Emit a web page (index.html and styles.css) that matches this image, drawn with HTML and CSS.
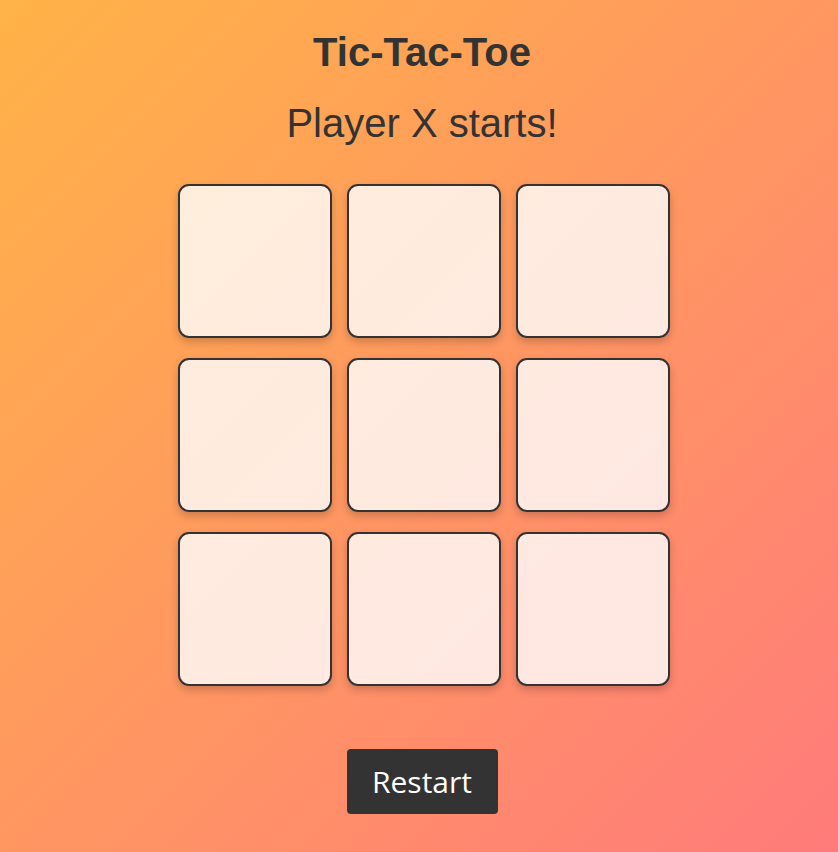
FILE: index.html
```html
<!DOCTYPE html>
<html lang="en">
<head>
<meta charset="utf-8">
<title>Tic-Tac-Toe</title>
<link rel="stylesheet" href="styles.css">
</head>
<body>
<main class="game">
  <h1 class="title">Tic-Tac-Toe</h1>
  <p class="status">Player X starts!</p>
  <div class="board">
    <button class="cell"></button>
    <button class="cell"></button>
    <button class="cell"></button>
    <button class="cell"></button>
    <button class="cell"></button>
    <button class="cell"></button>
    <button class="cell"></button>
    <button class="cell"></button>
    <button class="cell"></button>
  </div>
  <button class="restart">Restart</button>
</main>
</body>
</html>
```
FILE: styles.css
```css
html, body {
  margin: 0;
  padding: 0;
  height: 100%;
}
body {
  background: linear-gradient(135deg, #ffb347 0%, #ff7b7b 100%);
  font-family: "Liberation Sans", Arial, sans-serif;
  color: #333;
  overflow: hidden;
}
.game {
  display: flex;
  flex-direction: column;
  align-items: center;
  padding-left: 6px;
  padding-top: 29px;
}
.title {
  margin: 0;
  font-size: 40px;
  font-weight: bold;
  line-height: 46px;
}
.status {
  margin: 25px 0 0;
  font-size: 40px;
  line-height: 46px;
}
.board {
  margin-top: 38px;
  margin-left: 3px;
  display: grid;
  grid-template-columns: repeat(3, 154px);
  grid-auto-rows: 154px;
  column-gap: 15px;
  row-gap: 20px;
}
.cell {
  box-sizing: border-box;
  width: 154px;
  height: 154px;
  border: 2px solid #333;
  border-radius: 11px;
  background: rgba(255, 255, 255, 0.8);
  box-shadow: 0 4px 8px rgba(0, 0, 0, 0.2);
  padding: 0;
  cursor: pointer;
}
.restart {
  margin-top: 63px;
  box-sizing: border-box;
  width: 151px;
  height: 65px;
  padding: 0;
  border: none;
  border-radius: 4px;
  background: #333;
  color: #fff;
  font-family: "Open Sans", sans-serif;
  font-size: 30px;
  cursor: pointer;
}
```
